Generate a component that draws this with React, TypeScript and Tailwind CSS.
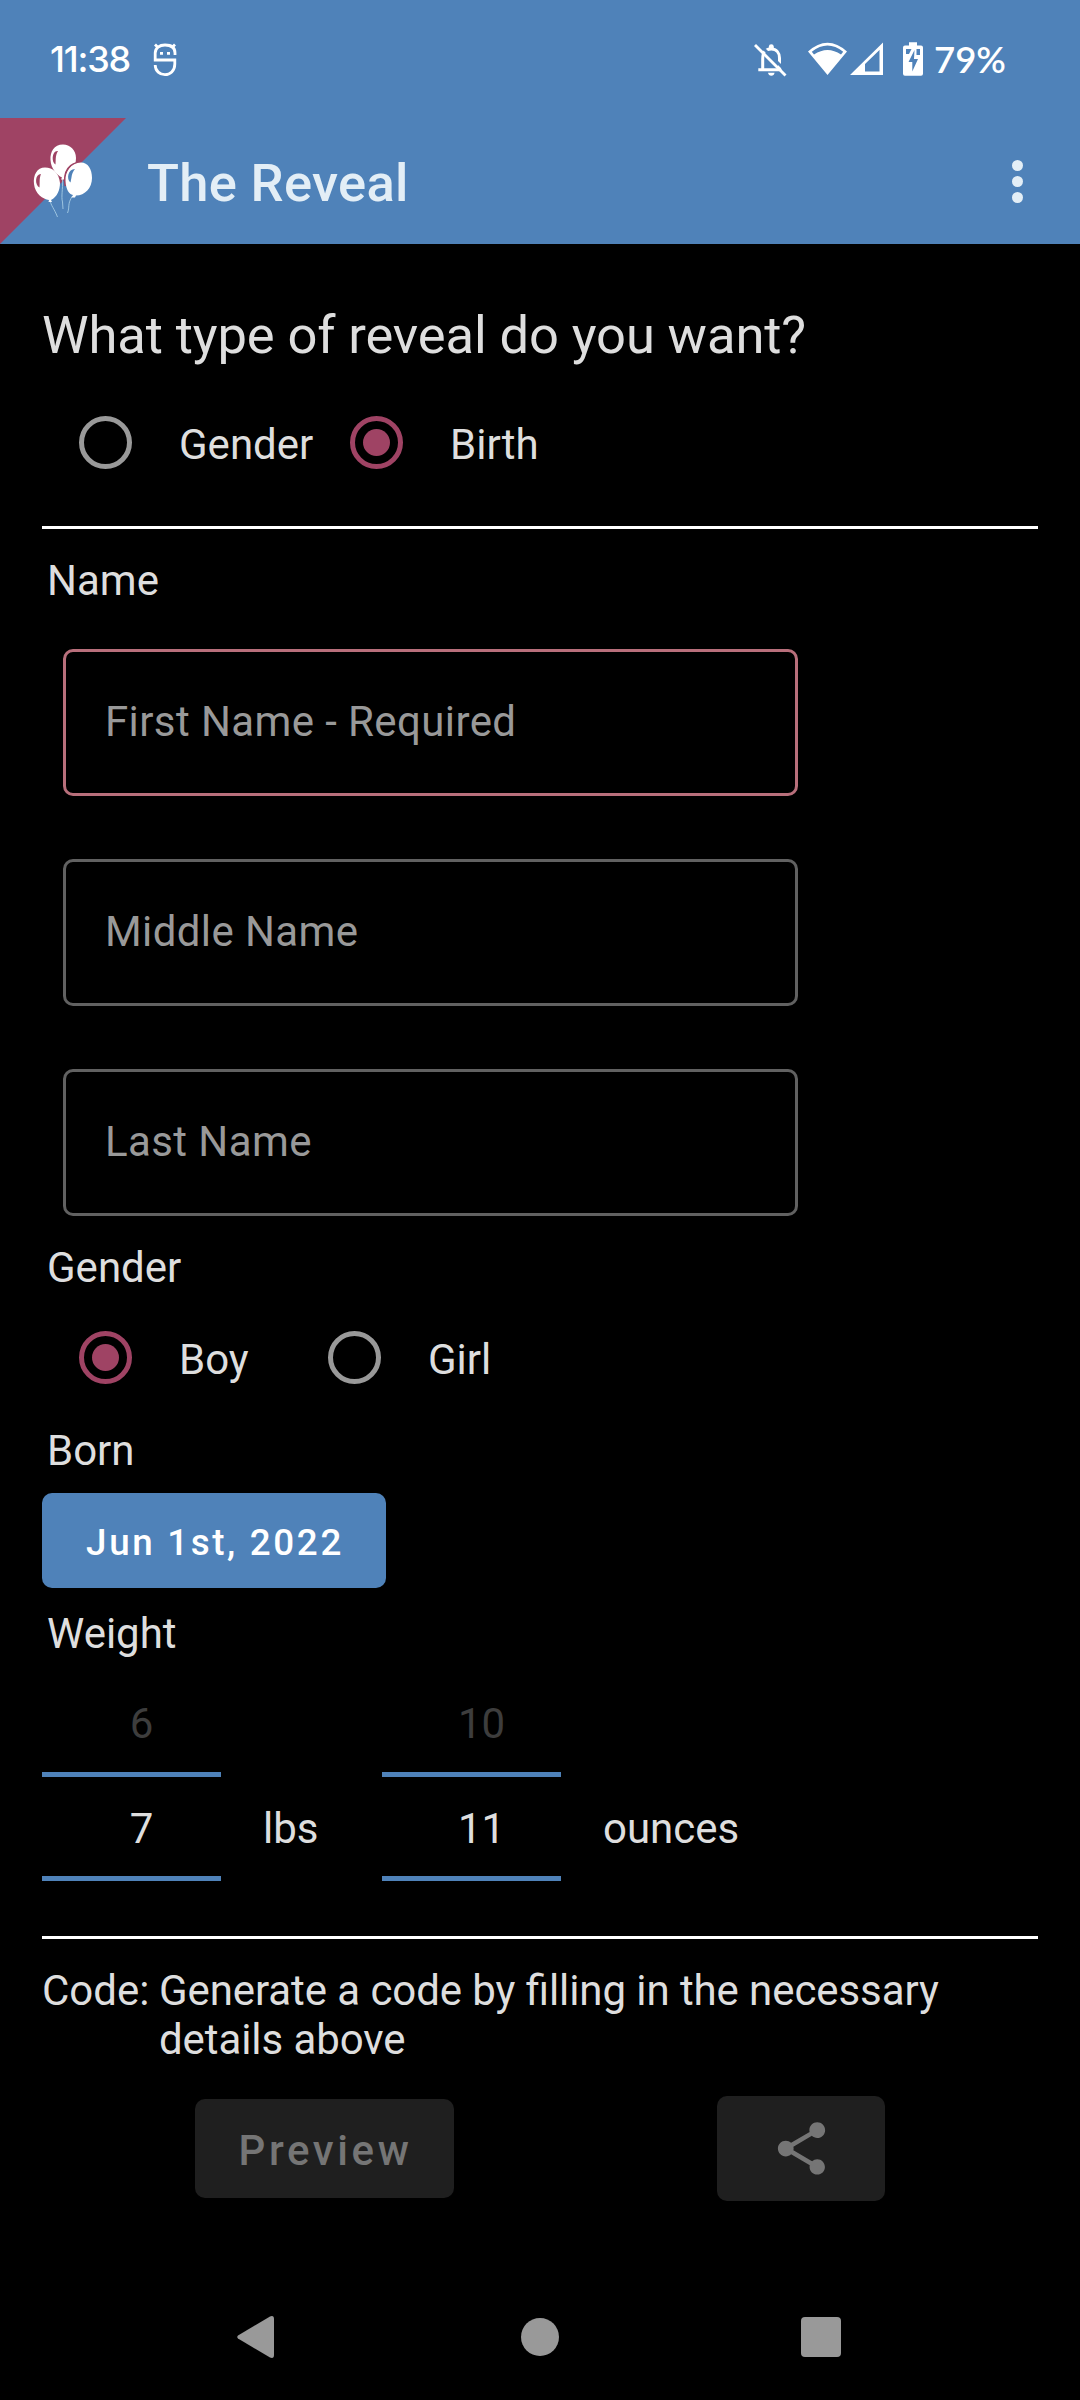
import React from "react";

function Radio({ checked }: { checked?: boolean }) {
  return checked ? (
    <span className="flex size-[53px] shrink-0 items-center justify-center rounded-full border-[5px] border-[#9f4364]">
      <span className="size-[27px] rounded-full bg-[#9f4364]" />
    </span>
  ) : (
    <span className="size-[53px] shrink-0 rounded-full border-[5px] border-[#999999]" />
  );
}

function Option({ label, checked, className }: { label: string; checked?: boolean; className: string }) {
  return (
    <label className={"flex items-center " + className}>
      <Radio checked={checked} />
      <span className="ml-[47px] pt-[4px] leading-[49px]">{label}</span>
    </label>
  );
}

function Field({ label, required }: { label: string; required?: boolean }) {
  return (
    <div
      className={
        "flex h-[147px] w-[735px] items-center rounded-[10px] border-[3px] pb-[2px] pl-[39px] text-[#999999] " +
        (required ? "border-[#b86f7b]" : "border-[#616161]")
      }
    >
      <span className="leading-[49px] tracking-[0.4px]">{label}</span>
    </div>
  );
}

function Picker({ previous, value }: { previous: string; value: string }) {
  return (
    <div className="w-[179px] text-center">
      <div className="h-[99px] pt-[26px] pl-[20px] leading-[49px] text-[#3d3d3d]">{previous}</div>
      <div className="h-[109px] border-y-[5px] border-[#4f82b9] pt-[27px] pl-[20px] leading-[49px]">{value}</div>
    </div>
  );
}

function Balloons() {
  return (
    <svg className="h-[126px] w-[126px]" viewBox="0 0 126 126">
      <path d="M0 0H126L0 126Z" fill="#9f4364" />
      <g stroke="#a5cbe3" strokeWidth="0.9" fill="none">
        <path d="M50 82C51 88 54 90 57.500 99" />
        <path d="M62.500 61C63 72 61 78 62.500 84L63 91" />
        <path d="M72.500 78C67 86 70 89 67.500 95" />
      </g>
      <path d="M63 26.500C54 26.500 50 34 50.500 42C51 51 57 57 62 59.500L61 61.500H65L64 59.500C71 56 76 49 76 40C76 32 70 26.500 63 26.500Z" fill="#fff" />
      <path d="M45 49.500C37 49.500 33 57 34 66C35 76 43 81 49 82L48.500 84H52L51 82C57 79 60 72 60 65C59 55 53 49.500 45 49.500Z" fill="#fff" />
      <path d="M65.500 68C63 53 70 44.500 81 44.500" fill="none" stroke="#9f4364" strokeWidth="2.200" />
      <path d="M81 44.500C71 44.500 65 54 65.500 63C66 72 69 76 73 77L71.500 79.500H75L76 77.500C85 77.500 92 70 92 60C92 51 88 44.500 81 44.500Z" fill="#fff" />
      <path d="M58 33C52 32 51 44 55.500 46.500C56 42 55 38 58 33ZM41 56C35 56 34.500 67 39.500 69.500C40 64 39 61 41 56Z" fill="#9f4364" />
      <path d="M75 51C68 51 66 61 70.500 64.500C72 59 71 56 75 51Z" fill="#4f82b9" />
    </svg>
  );
}

function StatusBar() {
  return (
    <div className="flex h-[118px] items-center justify-between pr-[76px] pl-[50px] font-[Lato,sans-serif] text-[36.5px] font-semibold text-white">
      <div className="flex items-center">
        <span className="w-[84px] font-[Inter,sans-serif] text-[36px] font-medium tracking-[-1.2px]">11:38</span>
        <svg className="ml-[18px] h-[36px] w-[26px]" viewBox="0 0 26 36" fill="none" stroke="#fff" strokeWidth="2.800">
          <path d="M23 14V12C23 6 18.500 4 13 4S3.200 7 3.200 12V19H22.800V23C22.800 30 18 33.700 13 33.700S3.200 30 3.200 24" />
          <path d="M3 3.500L6.500 7M23 3.500L19.500 7" />
          <path d="M8 12.300H11M15 12.300H18" />
        </svg>
      </div>
      <div className="flex items-center">
        <svg className="h-[36px] w-[34px]" viewBox="0 0 34 36">
          <path d="M8.700 28V18C8.700 10 12 8 17.300 8S25.500 12 25.500 17V28.700M4.300 28.700H27.500" fill="none" stroke="#fff" strokeWidth="3" />
          <path d="M14.800 8V5.500Q15 3.300 17.300 3.300T19.800 5.500V8ZM14 31.700H20.600Q20 34.700 17.300 34.700T14 31.700Z" fill="#fff" />
          <path d="M3.500 1.500L34 32" stroke="#4f82b9" strokeWidth="3" />
          <path d="M1 4L31.500 34.500" stroke="#fff" strokeWidth="2.900" />
        </svg>
        <svg className="ml-[20px] h-[36px] w-[39px]" viewBox="0 0 39 36" fill="#fff">
          <path fillRule="evenodd" d="M0 10.500Q19.500 -7 39 10.500L19.500 34ZM3.800 10.800L6 13.500Q19.500 4.500 33 13.500L35.200 10.800Q19.500 -2 3.800 10.800Z" />
        </svg>
        <svg className="ml-[3px] h-[36px] w-[34px]" viewBox="0 0 34 36" fill="#fff">
          <path fillRule="evenodd" d="M0 34L33 1.500V34ZM15 23V30.500H29.500V9Z" />
        </svg>
        <svg className="mr-[11px] ml-[19px] h-[36px] w-[20px]" viewBox="0 0 20 36">
          <path d="M6 1.300H14V4.500H18Q20 4.500 20 6.500V32.700Q20 34.700 18 34.700H2Q0 34.700 0 32.700V6.500Q0 4.500 2 4.500H6Z" fill="#fff" />
          <path d="M3 8H8.500L6 13H3ZM13.500 8H17V14H13.500ZM11.500 9L5.500 21H9.300V30.500L15 18H11Z" fill="#4f82b9" />
        </svg>
        <span className="w-[70px]">79%</span>
      </div>
    </div>
  );
}

export default function App() {
  return (
    <div className="flex h-[2400px] w-[1080px] flex-col overflow-hidden bg-black font-[Roboto,sans-serif] text-[42px] text-[#dedede]">
      <header className="h-[244px] bg-[#4f82b9]">
        <StatusBar />
        <div className="flex h-[126px] items-center">
          <Balloons />
          <h1 className="ml-[21px] pt-[5px] text-[52.5px] font-medium tracking-[0.3px] text-[#e3eef6]">The Reveal</h1>
          <div className="mr-[57px] ml-auto flex flex-col gap-[5px]">
            <i className="size-[11px] rounded-full bg-[#e3eef6]" />
            <i className="size-[11px] rounded-full bg-[#e3eef6]" />
            <i className="size-[11px] rounded-full bg-[#e3eef6]" />
          </div>
        </div>
      </header>

      <main className="flex flex-col px-[42px]">
        <h2 className="mt-[60px] text-[52.5px] leading-[62px] tracking-[-0.12px]">What type of reveal do you want?</h2>
        <div className="mt-[50px] ml-[37px] flex h-[53px]">
          <Option label="Gender" className="w-[271px]" />
          <Option label="Birth" checked className="" />
        </div>
        <div className="mt-[57px] h-[3px] bg-white" />

        <h3 className="mt-[27px] ml-[5px] leading-[49px]">Name</h3>
        <div className="mt-[44px] ml-[21px] flex flex-col gap-[63px]">
          <Field label="First Name - Required" required />
          <Field label="Middle Name" />
          <Field label="Last Name" />
        </div>

        <h3 className="mt-[27px] ml-[5px] leading-[49px]">Gender</h3>
        <div className="mt-[39px] ml-[37px] flex h-[53px]">
          <Option label="Boy" checked className="w-[249px]" />
          <Option label="Girl" className="" />
        </div>

        <h3 className="mt-[42px] ml-[5px] leading-[49px]">Born</h3>
        <button className="mt-[18px] flex h-[95px] w-[344px] items-center justify-center rounded-[10px] bg-[#4f82b9] pt-[4px] pl-[2px] text-[36.75px] font-medium tracking-[2.65px] text-white">
          Jun 1st, 2022
        </button>

        <h3 className="mt-[21px] ml-[5px] leading-[49px]">Weight</h3>
        <div className="mt-[15px] flex items-end">
          <Picker previous="6" value="7" />
          <span className="mb-[28px] ml-[42px] w-[119px] leading-[49px]">lbs</span>
          <Picker previous="10" value="11" />
          <span className="mb-[28px] ml-[42px] leading-[49px]">ounces</span>
        </div>
        <div className="mt-[55px] h-[3px] bg-white" />

        <div className="mt-[27px] flex leading-[49px]">
          <span className="w-[117px] shrink-0">Code:</span>
          <p className="w-[820px] tracking-[-0.08px] [font-feature-settings:'liga']">
            Generate a code by filling in the necessary details above
          </p>
        </div>
        <div className="mt-[32px] flex items-center pl-[153px]">
          <button className="flex h-[99px] w-[259px] items-center justify-center rounded-[10px] bg-[#1f1f1f] pt-[4px] pl-[2px] font-medium tracking-[3.6px] text-[#757575]">
            Preview
          </button>
          <button className="ml-[263px] flex h-[105px] w-[168px] items-center justify-center rounded-[10px] bg-[#1f1f1f]">
            <svg className="size-[63px]" viewBox="0 0 24 24" fill="#757575">
              <path d="M18 16.080c-.760 0-1.440.300-1.960.770L8.910 12.700c.050-.230.090-.460.090-.700s-.040-.470-.090-.700l7.050-4.110c.540.500 1.250.810 2.040.810 1.660 0 3-1.340 3-3s-1.340-3-3-3-3 1.340-3 3c0 .240.040.470.090.700L8.040 9.810C7.500 9.310 6.790 9 6 9c-1.660 0-3 1.340-3 3s1.340 3 3 3c.790 0 1.500-.310 2.040-.810l7.120 4.160c-.050.210-.080.430-.080.650 0 1.610 1.310 2.920 2.920 2.920 1.610 0 2.920-1.310 2.920-2.920s-1.310-2.920-2.920-2.920z" />
            </svg>
          </button>
        </div>
      </main>

      <nav className="mt-auto mb-[41px] flex h-[44px] items-center pl-[237px]">
        <svg className="h-[44px] w-[37px]" viewBox="0 0 37 44" fill="#999999">
          <path d="M1 20.500L33 1.500Q37 0 37 4V40Q37 44 33 42.500L1 23.500Q-0.500 22 1 20.500Z" />
        </svg>
        <span className="ml-[247px] size-[38px] rounded-full bg-[#999999]" />
        <span className="ml-[242px] size-[40px] rounded-[4px] bg-[#999999]" />
      </nav>
    </div>
  );
}
